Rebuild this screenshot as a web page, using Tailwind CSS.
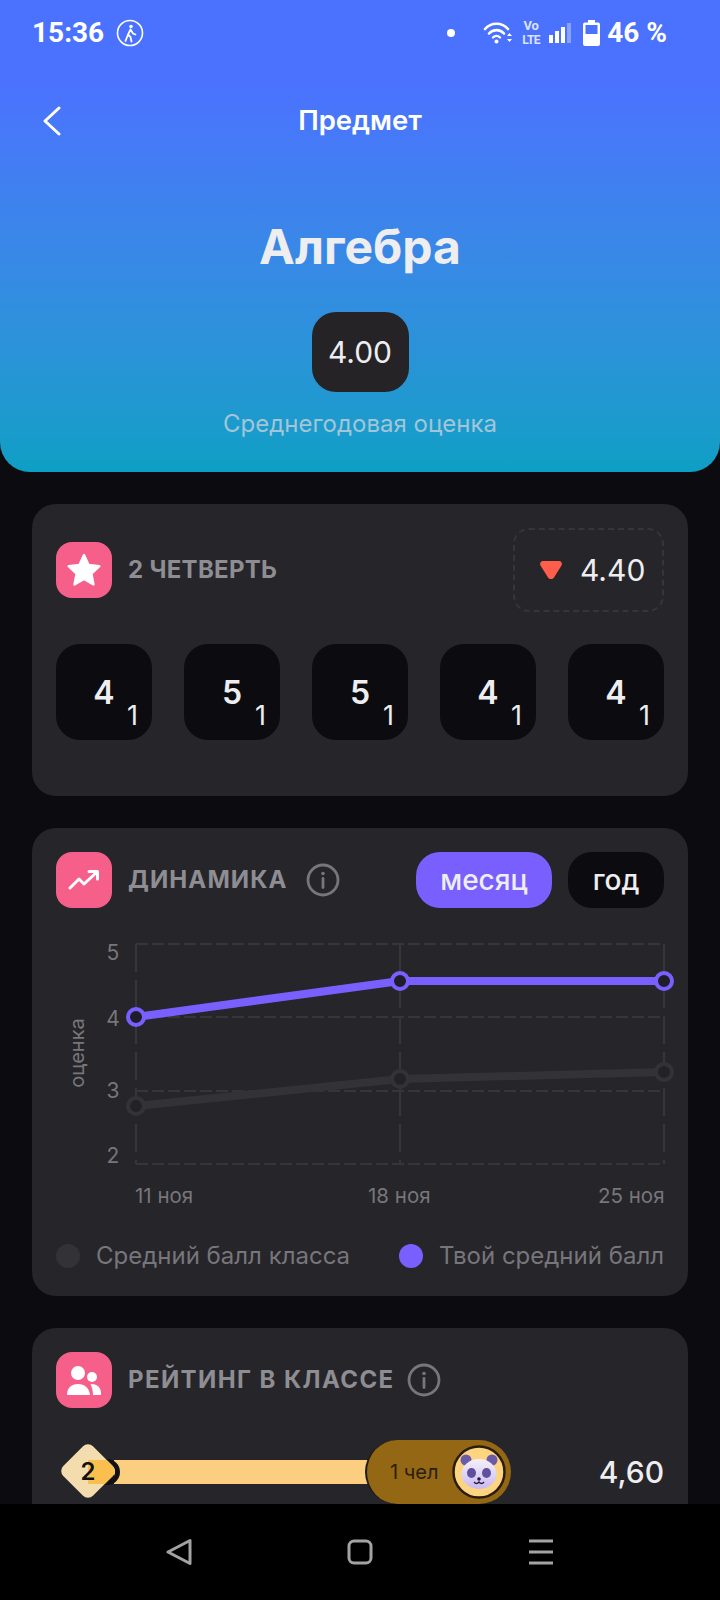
<!DOCTYPE html>
<html lang="ru">
<head>
<meta charset="utf-8">
<script src="https://cdn.jsdelivr.net/npm/@tailwindcss/browser@4"></script>
</head>
<body class="bg-black">
<div class="flex h-[1600px] w-[720px] flex-col overflow-hidden bg-[#0c0b10] font-['Inter',sans-serif] text-[#eeeef0]">
  <header class="flex h-[472px] shrink-0 flex-col items-center rounded-b-[30px] bg-linear-to-b from-[#4b72ff] from-[18%] to-[#0c9fc5]">
    <div class="flex h-[66px] w-full items-center px-8 font-['Roboto',sans-serif] text-white">
      <span class="text-[28px] font-bold">15:36</span>
      <svg class="ml-3 h-[28px] w-[28px]" viewBox="0 0 28 28" fill="none" stroke="#fff"><circle cx="14" cy="14" r="12.5" stroke-width="1.6"/><circle cx="15" cy="7.5" r="1.8" fill="#fff" stroke="none"/><path d="M14.5 10.5l-2.5 5 2.5 2.5 1 4.5M12 15.5l-2.5 6.5M14.500 10.500l2.500 4 2.500 1" stroke-width="1.800" stroke-linecap="round"/></svg>
      <span class="ml-[303px] h-2 w-2 rounded-full bg-white"></span>
      <svg class="ml-7 h-[24px] w-[30px]" viewBox="0 0 30 24" fill="none" stroke="#fff" stroke-linecap="round"><path d="M2 8C8 1 19 1 25 8" stroke-width="2.6"/><path d="M6 12.5C10 8 17 8 21 12.5" stroke-width="2.6"/><path d="M10 16.5c2-2 5-2 7 0" stroke-width="2.400"/><circle cx="13.5" cy="20.5" r="2" fill="#fff" stroke="none"/><path d="M24 15l2.5-3 2.5 3zM24 18l2.5 3 2.500-3z" fill="#fff" stroke="none"/></svg>
      <div class="ml-[8px] flex w-[20px] flex-col items-center text-[13px] leading-[15px] font-bold text-[#dbe3ff]"><span>Vo</span><span class="text-[12px] tracking-[-0.5px]">LTE</span></div>
      <svg class="ml-[8px] h-[22px] w-[23px]" viewBox="0 0 23 22"><rect x="0" y="13" width="4" height="8" fill="#fff"/><rect x="6" y="9" width="4" height="12" fill="#fff"/><rect x="12" y="5" width="4" height="16" fill="#fff"/><rect x="18" y="1" width="4" height="20" fill="#fff" fill-opacity=".35"/></svg>
      <svg class="ml-[11px] h-[26px] w-[17px]" viewBox="0 0 17 26"><path d="M5 0h7v2.5h3a2 2 0 0 1 2 2V24a2 2 0 0 1-2 2H2a2 2 0 0 1-2-2V4.500a2 2 0 0 1 2-2h3z" fill="#fff"/><rect x="2.500" y="5" width="12" height="9" fill="#4b72ff"/></svg>
      <span class="ml-[7px] text-[28px] font-bold whitespace-nowrap">46 %</span>
    </div>
    <div class="relative mt-[27px] flex h-[56px] w-full items-center justify-center">
      <svg class="absolute top-[13px] left-[42px] h-[30px] w-[20px]" viewBox="0 0 20 30" fill="none" stroke="#fff" stroke-width="3" stroke-linecap="round" stroke-linejoin="round"><path d="M17 2L3 15l14 13"/></svg>
      <span class="text-[27.500px] leading-none font-semibold text-white">Предмет</span>
    </div>
    <h1 class="mt-[69px] text-[48px] leading-[58px] font-bold">Алгебра</h1>
    <div class="mt-[36px] flex h-[80px] w-[97px] items-center justify-center rounded-[24px] bg-[#262327] text-[30px]">4.00</div>
    <p class="mt-[16px] text-[24px] leading-[32px] text-[#a3c5d8]">Среднегодовая оценка</p>
  </header>

  <main class="flex min-h-0 flex-1 flex-col gap-8 overflow-hidden px-8 pt-8">
    <section class="h-[292px] shrink-0 rounded-[24px] bg-[#26252a] px-6 pt-6">
      <div class="flex h-[84px] items-center">
        <div class="flex h-14 w-14 items-center justify-center rounded-[16px] bg-[#f65f8a]">
          <svg class="h-[38px] w-[38px]" viewBox="0 0 24 24" fill="#fff" stroke="#fff" stroke-width="1.5" stroke-linejoin="round"><path d="M12 2.500l2.900 6.300 6.800.8-5 4.700 1.300 6.800-6-3.400-6 3.400 1.300-6.800-5-4.700 6.800-.8z"/></svg>
        </div>
        <h2 class="ml-4 text-[24px] font-bold tracking-[0.3px] text-[#8e8d92]">2 ЧЕТВЕРТЬ</h2>
        <div class="ml-auto flex h-[84px] w-[151px] items-center rounded-[16px] border-2 border-dashed border-[#36353a] pl-[25px]">
          <svg class="h-[18px] w-[22px]" viewBox="0 0 22 18" fill="#ff5f4a"><path d="M3 0h16c2.500 0 3.500 2.500 2.500 4.500l-7.500 12c-1.500 2-4.500 2-6 0L.5 4.500C-.5 2.500.5 0 3 0z"/></svg>
          <span class="ml-[18px] text-[30px]">4.40</span>
        </div>
      </div>
      <div class="mt-8 flex justify-between">
        <div class="relative flex h-24 w-24 items-center justify-center rounded-[24px] bg-[#0c0b10] text-[32px] font-semibold"><span class="mt-[1px]">4</span><span class="absolute right-[14px] bottom-[8px] text-[27px] leading-[32px] font-normal">1</span></div>
        <div class="relative flex h-24 w-24 items-center justify-center rounded-[24px] bg-[#0c0b10] text-[32px] font-semibold"><span class="mt-[1px]">5</span><span class="absolute right-[14px] bottom-[8px] text-[27px] leading-[32px] font-normal">1</span></div>
        <div class="relative flex h-24 w-24 items-center justify-center rounded-[24px] bg-[#0c0b10] text-[32px] font-semibold"><span class="mt-[1px]">5</span><span class="absolute right-[14px] bottom-[8px] text-[27px] leading-[32px] font-normal">1</span></div>
        <div class="relative flex h-24 w-24 items-center justify-center rounded-[24px] bg-[#0c0b10] text-[32px] font-semibold"><span class="mt-[1px]">4</span><span class="absolute right-[14px] bottom-[8px] text-[27px] leading-[32px] font-normal">1</span></div>
        <div class="relative flex h-24 w-24 items-center justify-center rounded-[24px] bg-[#0c0b10] text-[32px] font-semibold"><span class="mt-[1px]">4</span><span class="absolute right-[14px] bottom-[8px] text-[27px] leading-[32px] font-normal">1</span></div>
      </div>
    </section>

    <section class="h-[468px] shrink-0 rounded-[24px] bg-[#26252a] pt-6">
      <div class="flex h-14 items-center px-6">
        <div class="flex h-14 w-14 items-center justify-center rounded-[16px] bg-[#f65f8a]">
          <svg class="h-[32px] w-[32px]" viewBox="0 0 32 32" fill="none" stroke="#fff" stroke-width="3" stroke-linecap="round" stroke-linejoin="round"><path d="M2 24l9-9 5 5 13-12M21 7.500h8.500V15"/></svg>
        </div>
        <h2 class="ml-4 text-[24px] font-bold tracking-[1.1px] text-[#8e8d92]">ДИНАМИКА</h2>
        <svg class="ml-[18px] h-[34px] w-[34px]" viewBox="0 0 34 34" fill="none" stroke="#77767b"><circle cx="17" cy="17" r="15" stroke-width="2.800"/><circle cx="17" cy="10.500" r="1.800" fill="#77767b" stroke="none"/><path d="M17 15.500v9" stroke-width="2.800" stroke-linecap="round"/></svg>
        <div class="ml-auto flex h-14 w-[136px] items-center justify-center rounded-[24px] bg-[#7a5fff] text-[28px] font-medium">месяц</div>
        <div class="ml-4 flex h-14 w-24 items-center justify-center rounded-[24px] bg-[#0c0b10] text-[28px] font-medium">год</div>
      </div>
      <svg class="mt-3 block" width="656" height="316" viewBox="32 920 656 316" font-family="Inter, sans-serif" font-size="20.500" fill="#77767b">
        <g stroke="#36353a" stroke-width="2" fill="none">
          <path d="M136 944H664M136 1017H664M136 1091H664M136 1164H664" stroke-dasharray="12 4"/>
          <path d="M136 944V1164M400 944V1164M664 944V1164" stroke-dasharray="28 8"/>
        </g>
        <g font-size="21" text-anchor="middle">
          <text x="113" y="960">5</text><text x="113" y="1026">4</text><text x="113" y="1098">3</text><text x="113" y="1163">2</text>
        </g>
        <text transform="translate(84 1053) rotate(-90)" text-anchor="middle" font-size="20">оценка</text>
        <path d="M136 1106L400 1079L664 1072" fill="none" stroke="#333237" stroke-width="8"/>
        <g fill="#232228" stroke="#333237" stroke-width="4"><circle cx="136" cy="1106" r="8"/><circle cx="400" cy="1079" r="8"/><circle cx="664" cy="1072" r="8"/></g>
        <path d="M136 1017L400 981H664" fill="none" stroke="#7a5fff" stroke-width="8"/>
        <g fill="#1f1d2a" stroke="#7a5fff" stroke-width="4"><circle cx="136" cy="1017" r="8"/><circle cx="400" cy="981" r="8"/><circle cx="664" cy="981" r="8"/></g>
        <text x="135" y="1203">11 ноя</text><text x="368" y="1203">18 ноя</text><text x="598" y="1203">25 ноя</text>
      </svg>
      <div class="mt-[4px] flex h-8 items-center px-6 text-[24px] whitespace-nowrap text-[#77767b]">
        <span class="h-6 w-6 rounded-full bg-[#333237]"></span>
        <span class="ml-4">Средний балл класса</span>
        <span class="ml-auto h-6 w-6 rounded-full bg-[#7a5fff]"></span>
        <span class="ml-4">Твой средний балл</span>
      </div>
    </section>

    <section class="h-[300px] shrink-0 rounded-[24px] bg-[#26252a] px-6 pt-6">
      <div class="flex h-14 items-center">
        <div class="flex h-14 w-14 items-center justify-center rounded-[16px] bg-[#f65f8a]">
          <svg class="h-[36px] w-[36px]" viewBox="0 0 36 36" fill="#fff"><circle cx="12" cy="11" r="7"/><circle cx="26" cy="15" r="5"/><path d="M1 33c0-7 4-11 11-11s11 4 12 11z"/><path d="M24.500 22.500c.5-.3 1-.5 1.500-.5 5 0 9 3.500 9 9v2h-8c0-4-.8-7.500-2.500-10.500z"/></svg>
        </div>
        <h2 class="ml-4 text-[24px] font-bold tracking-[1.4px] whitespace-nowrap text-[#8e8d92]">РЕЙТИНГ В КЛАССЕ</h2>
        <svg class="ml-[12px] h-[34px] w-[34px]" viewBox="0 0 34 34" fill="none" stroke="#77767b"><circle cx="17" cy="17" r="15" stroke-width="2.800"/><circle cx="17" cy="10.500" r="1.800" fill="#77767b" stroke="none"/><path d="M17 15.500v9" stroke-width="2.800" stroke-linecap="round"/></svg>
      </div>
      <div class="mt-[32px] flex h-16 items-center">
        <div class="relative flex h-16 w-[454px] items-center">
          <div class="absolute top-[20px] left-[58px] h-6 w-[260px] bg-[#fbcf7f]"></div>
          <span class="absolute top-[19px] left-[44px] h-[26px] w-[20px] rounded-r-full border-[5px] border-l-0 border-[#111014]"></span>
          <svg class="absolute top-[1px] left-[2px]" width="60" height="60" viewBox="0 0 60 60"><defs><clipPath id="dia"><rect x="9" y="9" width="42" height="42" rx="7" transform="rotate(45 30 30)"/></clipPath></defs><rect x="9" y="9" width="42" height="42" rx="7" transform="rotate(45 30 30)" fill="#f3dcae"/><rect x="30" y="19" width="32" height="24" fill="#fbbf4f" clip-path="url(#dia)"/><text x="30" y="39" text-anchor="middle" font-size="24" font-weight="600" font-family="Inter, sans-serif" fill="#111014">2</text></svg>
          <div class="absolute top-0 left-[309px] flex h-16 w-[146px] items-center rounded-full border-l-2 border-[#1f1a12] bg-[#946715] pl-[23px] text-[20px] text-[#2a1f0a]">1 чел</div>
          <svg class="absolute top-[5px] left-[396px]" width="54" height="54" viewBox="0 0 54 54"><defs><linearGradient id="face" x1="0" y1="0" x2="0" y2="1"><stop offset="0" stop-color="#f4f0fb"/><stop offset="1" stop-color="#c9baf2"/></linearGradient></defs><circle cx="27" cy="27" r="25.500" fill="#fdd47f" stroke="#2a1d10" stroke-width="2.500"/><circle cx="14" cy="15" r="5.500" fill="#6b5aa8"/><circle cx="40" cy="15" r="5.500" fill="#6b5aa8"/><ellipse cx="27" cy="29" rx="17.500" ry="15" fill="url(#face)"/><ellipse cx="19.500" cy="28" rx="4.500" ry="5" fill="#5f4f9c"/><ellipse cx="34.500" cy="28" rx="4.500" ry="5" fill="#5f4f9c"/><circle cx="27" cy="34" r="1.800" fill="#2a1d3a"/><path d="M22 37c1.500 2 3.500 2 5 0 1.500 2 3.500 2 5 0" fill="none" stroke="#2a1d3a" stroke-width="1.300"/></svg>
        </div>
        <span class="ml-auto text-[30px] font-medium">4,60</span>
      </div>
    </section>
  </main>

  <nav class="flex h-[96px] shrink-0 items-center bg-black">
    <svg class="ml-[166px] h-[28px] w-[26px]" viewBox="0 0 26 28" fill="none" stroke="#a3a3a3" stroke-width="3" stroke-linejoin="round"><path d="M24 2.500V25.500L2 14z"/></svg>
    <svg class="ml-[155px] h-[26px] w-[26px]" viewBox="0 0 26 26" fill="none" stroke="#a3a3a3" stroke-width="3"><rect x="2" y="2" width="22" height="22" rx="5"/></svg>
    <svg class="ml-[155px] h-[26px] w-[26px]" viewBox="0 0 26 26" stroke="#a3a3a3" stroke-width="3"><path d="M1 2h24M1 13h24M1 24h24"/></svg>
  </nav>
</div>
</body>
</html>
